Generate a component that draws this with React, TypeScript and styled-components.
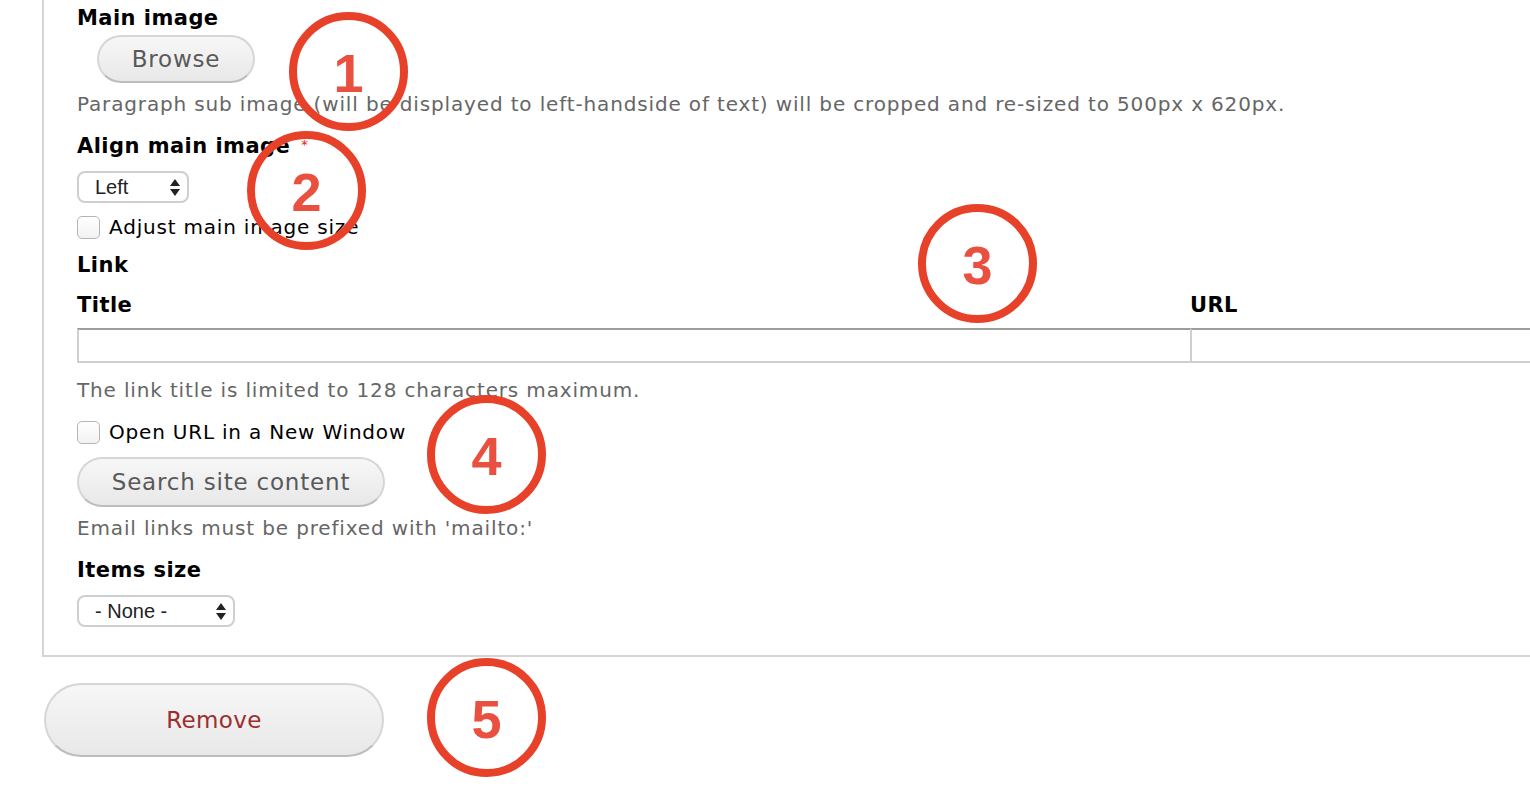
import React from "react";
import styled, { createGlobalStyle } from "styled-components";

const Global = createGlobalStyle`
  html, body { margin: 0; padding: 0; background: #fff; overflow: hidden; }
  body { font-family: "DejaVu Sans", Verdana, sans-serif; }
  * { box-sizing: border-box; }
`;

const Page = styled.div`
  position: relative;
  width: 1530px;
  height: 788px;
  overflow: hidden;
`;

const Fieldset = styled.div`
  margin-left: 42px;
  width: 1600px;
  border-left: 2px solid #d4d4d4;
  border-bottom: 2px solid #d4d4d4;
  padding: 6px 0 28px 33px;
  display: flex;
  flex-direction: column;
  align-items: flex-start;
`;

const Label = styled.div<{ $mt?: number }>`
  margin-top: ${(p) => p.$mt ?? 0}px;
  font-size: 21px;
  line-height: 24px;
  height: 24px;
  font-weight: bold;
  color: #000;
  letter-spacing: 0.45px;
  white-space: nowrap;
`;

const Required = styled.span`
  position: relative;
  top: -4px;
  color: #e62600;
  font-size: 13px;
  line-height: 0;
  margin-left: 11px;
  font-weight: normal;
`;

const Help = styled.div<{ $mt?: number }>`
  margin-top: ${(p) => p.$mt ?? 0}px;
  font-size: 20px;
  line-height: 24px;
  color: #666;
  letter-spacing: 0.85px;
  white-space: nowrap;
`;

const Button = styled.button<{ $mt?: number; $ml?: number; $w: number; $h: number; $danger?: boolean }>`
  margin-top: ${(p) => p.$mt ?? 0}px;
  margin-left: ${(p) => p.$ml ?? 0}px;
  width: ${(p) => p.$w}px;
  height: ${(p) => p.$h}px;
  border-radius: 999px;
  border: 2px solid #d6d6d6;
  border-bottom-color: #bdbdbd;
  background: linear-gradient(#f7f7f7, #e8e8e8);
  font-family: "DejaVu Sans", Verdana, sans-serif;
  font-size: 23px;
  letter-spacing: ${(p) => (p.$danger ? 0.4 : 0.8)}px;
  color: ${(p) => (p.$danger ? "#9b2e2e" : "#595959")};
  padding: 0;
  cursor: pointer;
`;

const SelectWrap = styled.div<{ $mt?: number; $w: number }>`
  position: relative;
  margin-top: ${(p) => p.$mt ?? 0}px;
  width: ${(p) => p.$w}px;
  height: 32px;
`;

const Select = styled.select`
  appearance: none;
  -webkit-appearance: none;
  width: 100%;
  height: 100%;
  border: 2px solid #cfcfcf;
  border-radius: 8px;
  background: #fff;
  padding: 0 0 0 16px;
  font-family: "Liberation Sans", Arial, sans-serif;
  font-size: 20px;
  color: #222;
`;

const Arrows = styled.svg`
  position: absolute;
  right: 9px;
  top: 8px;
  width: 10px;
  height: 17px;
  pointer-events: none;
`;

const CheckRow = styled.label<{ $mt?: number }>`
  display: flex;
  align-items: center;
  gap: 9px;
  height: 24px;
  margin-top: ${(p) => p.$mt ?? 0}px;
  font-size: 20px;
  line-height: 24px;
  letter-spacing: 0.8px;
  color: #000;
  white-space: nowrap;
`;

const Check = styled.input`
  appearance: none;
  -webkit-appearance: none;
  margin: 0;
  width: 23px;
  height: 23px;
  border: 1.5px solid #b5b5b5;
  border-radius: 5px;
  background: linear-gradient(#ffffff, #f2f2f2);
`;

const LinkGrid = styled.div`
  margin-top: 16px;
  display: grid;
  grid-template-columns: 1113px 400px;
  row-gap: 11px;
`;

const TextInput = styled.input`
  height: 35px;
  width: 100%;
  margin: 0;
  border: none;
  border-top: 2px solid #9d9d9d;
  border-bottom: 2px solid #cfcfcf;
  border-left: 2px solid #cfcfcf;
  background: #fff;
  outline: none;
`;

const Marker = styled.div<{ $x: number; $y: number }>`
  position: absolute;
  left: ${(p) => p.$x}px;
  top: ${(p) => p.$y}px;
  width: 119px;
  height: 119px;
  border: 8px solid #e8412a;
  border-radius: 50%;
  display: flex;
  align-items: center;
  justify-content: center;
  font-family: "Liberation Sans", Arial, sans-serif;
  font-weight: bold;
  font-size: 54px;
  color: #ea5040;
  padding-top: 2px;
`;

const ArrowIcon = () => (
  <Arrows viewBox="0 0 10 17">
    <path d="M5 0 L10 7 L0 7 Z" fill="#222" />
    <path d="M0 10 L10 10 L5 17 Z" fill="#222" />
  </Arrows>
);

const markers = [
  { n: 1, x: 289, y: 12 },
  { n: 2, x: 247, y: 131 },
  { n: 3, x: 918, y: 204 },
  { n: 4, x: 427, y: 395 },
  { n: 5, x: 427, y: 658 },
];

export default function App() {
  return (
    <Page>
      <Global />
      <Fieldset>
        <Label>Main image</Label>
        <Button $mt={5} $ml={20} $w={158} $h={48}>Browse</Button>
        <Help $mt={9}>
          Paragraph sub image (will be displayed to left-handside of text) will be cropped and re-sized to 500px x 620px.
        </Help>
        <Label $mt={18}>
          Align main image<Required>*</Required>
        </Label>
        <SelectWrap $mt={13} $w={112}>
          <Select defaultValue="left">
            <option value="left">Left</option>
            <option value="right">Right</option>
          </Select>
          <ArrowIcon />
        </SelectWrap>
        <CheckRow $mt={12}>
          <Check type="checkbox" />
          Adjust main image size
        </CheckRow>
        <Label $mt={14}>Link</Label>
        <LinkGrid>
          <Label>Title</Label>
          <Label>URL</Label>
          <TextInput type="text" />
          <TextInput type="text" />
        </LinkGrid>
        <Help $mt={15}>The link title is limited to 128 characters maximum.</Help>
        <CheckRow $mt={18}>
          <Check type="checkbox" />
          Open URL in a New Window
        </CheckRow>
        <Button $mt={13} $w={308} $h={50}>Search site content</Button>
        <Help $mt={9}>Email links must be prefixed with 'mailto:'</Help>
        <Label $mt={18}>Items size</Label>
        <SelectWrap $mt={13} $w={158}>
          <Select defaultValue="none">
            <option value="none">- None -</option>
          </Select>
          <ArrowIcon />
        </SelectWrap>
      </Fieldset>
      <Button $mt={26} $ml={44} $w={340} $h={74} $danger>Remove</Button>
      {markers.map((m) => (
        <Marker key={m.n} $x={m.x} $y={m.y}>{m.n}</Marker>
      ))}
    </Page>
  );
}
